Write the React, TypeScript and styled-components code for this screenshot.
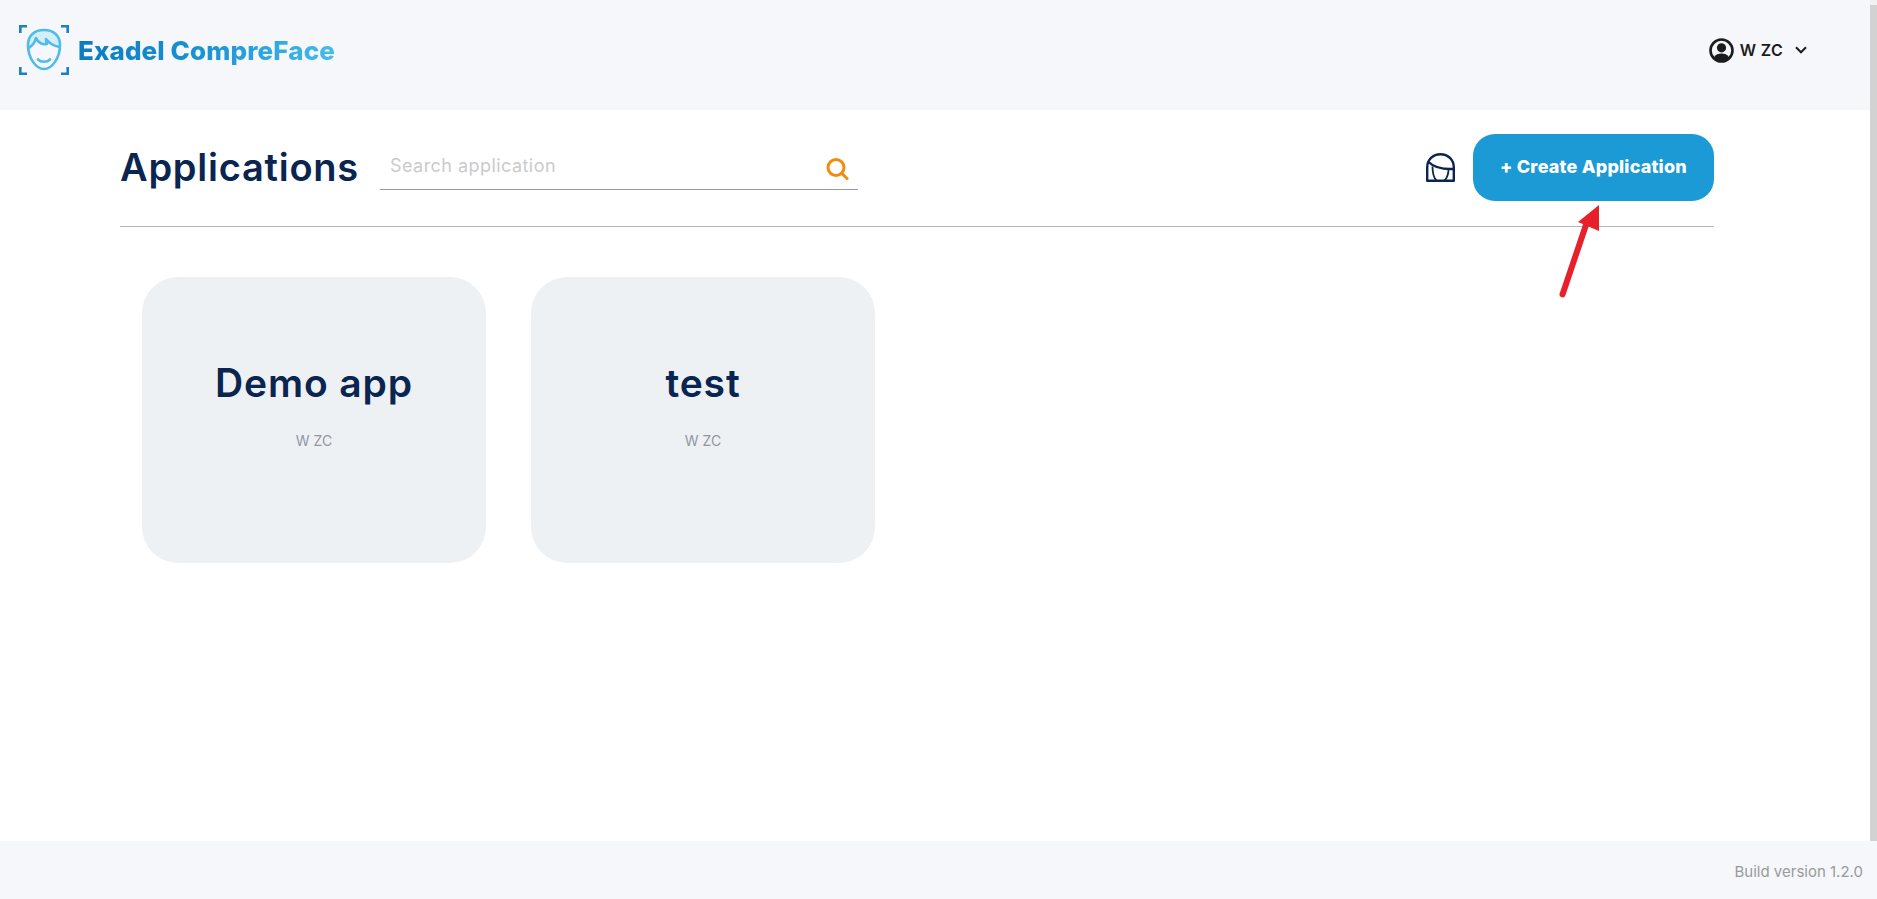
import React from 'react';
import styled, { createGlobalStyle } from 'styled-components';

const GlobalStyle = createGlobalStyle`
  html, body {
    margin: 0;
    padding: 0;
    height: 100%;
    overflow: hidden;
    background: #fff;
    font-family: Inter, "Liberation Sans", sans-serif;
  }
`;

const Page = styled.div`
  display: flex;
  flex-direction: column;
  width: 1877px;
  height: 899px;
`;

const Body = styled.div`
  display: flex;
  flex: 1;
  min-height: 0;
`;

const Content = styled.div`
  display: flex;
  flex-direction: column;
  flex: 1;
  position: relative;
`;

const ScrollTrack = styled.div`
  width: 7px;
  background: #f1f1f1;
  padding-top: 5px;
  display: flex;
`;

const ScrollThumb = styled.div`
  flex: 1;
  background: #d2d2d2;
`;

const Header = styled.header`
  height: 110px;
  box-sizing: border-box;
  background: #f5f7fb;
  display: flex;
  align-items: center;
  justify-content: space-between;
  padding: 0 63px 10px 19px;
`;

const Logo = styled.div`
  display: flex;
  align-items: center;
  gap: 9px;
`;

const LogoText = styled.span`
  font-size: 26px;
  font-weight: 800;
  letter-spacing: 0.12px;
  background: linear-gradient(90deg, #0a7cc0 0%, #1b93d4 50%, #45bceb 100%);
  -webkit-background-clip: text;
  background-clip: text;
  color: transparent;
`;

const UserMenu = styled.div`
  display: flex;
  align-items: center;
  color: #1c1c1c;
  font-size: 16px;
  font-weight: 600;
`;

const UserName = styled.span`
  margin: 0 12px 0 6px;
  letter-spacing: 0.3px;
`;

const Main = styled.main`
  flex: 1;
  padding: 0 156px 0 120px;
`;

const TitleBar = styled.div`
  height: 117px;
  display: flex;
  align-items: center;
  border-bottom: 1px solid #b8b8b8;
  box-sizing: border-box;
`;

const Title = styled.h1`
  margin: 0 21px 3px 0;
  width: 239px;
  font-size: 38px;
  font-weight: 600;
  letter-spacing: 0.75px;
  color: #0a2550;
  white-space: nowrap;
`;

const SearchBox = styled.div`
  width: 478px;
  height: 44px;
  box-sizing: border-box;
  border-bottom: 1px solid #9b9b9b;
  display: flex;
  align-items: center;
  justify-content: space-between;
  padding: 0 9px 4px 10px;
`;

const SearchInput = styled.input`
  flex: 1;
  border: 0;
  outline: 0;
  padding: 0;
  background: transparent;
  font-family: inherit;
  font-size: 18px;
  letter-spacing: 0.45px;
  color: #333;
  &::placeholder {
    color: #cbcbcb;
    opacity: 1;
  }
`;

const SearchGlyph = styled.svg`
  margin-top: 6px;
`;

const Actions = styled.div`
  margin-left: auto;
  display: flex;
  align-items: center;
  gap: 18px;
  margin-bottom: 1px;
`;

const CreateButton = styled.button`
  width: 241px;
  height: 67px;
  border: 0;
  border-radius: 22px;
  padding: 0 0 2px;
  background: #1b9ad6;
  color: #fff;
  font-family: inherit;
  font-size: 18px;
  font-weight: 800;
  letter-spacing: 0.2px;
`;

const CardGrid = styled.div`
  display: flex;
  gap: 45px;
  padding: 50px 0 0 22px;
`;

const Card = styled.div`
  width: 344px;
  height: 286px;
  border-radius: 36px;
  background: #eef1f4;
  display: flex;
  flex-direction: column;
  align-items: center;
  padding-top: 81px;
  box-sizing: border-box;
`;

const CardTitle = styled.div`
  font-size: 39px;
  line-height: 50px;
  font-weight: 600;
  letter-spacing: 0.9px;
  color: #0a2550;
`;

const CardOwner = styled.div`
  margin-top: 24px;
  font-size: 14px;
  line-height: 18px;
  color: #8e97a3;
`;

const Footer = styled.footer`
  height: 58px;
  background: #f5f7fb;
  display: flex;
  align-items: center;
  justify-content: flex-end;
  padding: 3px 14px 0 0;
  box-sizing: border-box;
  font-size: 15px;
  color: #9a9a9a;
`;

const Arrow = styled.svg`
  position: absolute;
  left: 1550px;
  top: 195px;
`;

const LogoIcon = () => (
  <svg width="50" height="50" viewBox="0 0 50 50" fill="none">
    <g stroke="#1b82c0" strokeWidth="2.6">
      <path d="M1.3 8V1.3H8" />
      <path d="M42 1.3H48.7V8" />
      <path d="M1.3 42V48.7H8" />
      <path d="M42 48.7H48.7V42" />
    </g>
    <path
      d="M9 23C13 21 16 17 17 13C19 18 24 20 28 19C27 17 27 15 27 14C30 18 35 21 41 22C41 11 34 5.5 25 5.5C16 5.5 9 11 9 23Z"
      fill="#d5eef9"
    />
    <g stroke="#4dbcea" strokeWidth="2.6" strokeLinecap="round" strokeLinejoin="round">
      <path d="M9 20C9 10 16 5 25 5C34 5 41 10 41 20C41 33 33 44 25 44C17 44 9 33 9 20Z" />
      <path d="M9.5 23C13 21 16 17 17 13C19 18 24 20 28 19C27 17 27 15 27 14C30 18 35 21 40.5 22" />
      <path d="M19 34.5C22 37.5 28 37.5 31 34.5" />
    </g>
  </svg>
);

const UserIcon = () => (
  <svg width="25" height="25" viewBox="0 0 25 25" fill="none">
    <circle cx="12.5" cy="12.5" r="11" stroke="#1c1c1c" strokeWidth="2.6" />
    <circle cx="12.5" cy="9.8" r="4.6" fill="#1c1c1c" />
    <path d="M4.8 19.5C6.5 16.5 9.5 15.6 12.5 15.6C15.5 15.6 18.5 16.5 20.2 19.5C18.3 21.8 15.6 23 12.5 23C9.4 23 6.7 21.8 4.8 19.5Z" fill="#1c1c1c" />
  </svg>
);

const Chevron = () => (
  <svg width="12" height="8" viewBox="0 0 12 8" fill="none">
    <path d="M1 1.3L6 6.3L11 1.3" stroke="#1c1c1c" strokeWidth="2" />
  </svg>
);

const SearchIcon = () => (
  <SearchGlyph width="23" height="22" viewBox="0 0 23 22" fill="none">
    <circle cx="10" cy="9.5" r="8" stroke="#f28c0f" strokeWidth="3" />
    <path d="M15.8 15.3L21 20.5" stroke="#f28c0f" strokeWidth="3" strokeLinecap="round" />
  </SearchGlyph>
);

const MaskIcon = () => (
  <svg width="29" height="29" viewBox="0 0 29 29" fill="none">
    <g stroke="#0a2550" strokeWidth="2.4" strokeLinejoin="round">
      <path d="M1.2 27.8V14.5C1.2 6.8 7 1.2 14.5 1.2C22 1.2 27.8 6.8 27.8 14.5V27.8Z" />
      <path d="M2.6 9C7 13.5 16 16.5 27.5 16" />
      <path d="M6.5 13.5C6.5 20 8 25 10.5 27.5" strokeWidth="1.8" />
      <path d="M22.5 16C22.5 21 21 25 18.5 27.5" strokeWidth="1.8" />
    </g>
  </svg>
);

const apps = ['Demo app', 'test'];

const App = () => {
  return (
    <Page>
      <GlobalStyle />
      <Body>
        <Content>
          <Header>
            <Logo>
              <LogoIcon />
              <LogoText>Exadel CompreFace</LogoText>
            </Logo>
            <UserMenu>
              <UserIcon />
              <UserName>W ZC</UserName>
              <Chevron />
            </UserMenu>
          </Header>
          <Main>
            <TitleBar>
              <Title>Applications</Title>
              <SearchBox>
                <SearchInput placeholder="Search application" />
                <SearchIcon />
              </SearchBox>
              <Actions>
                <MaskIcon />
                <CreateButton>+ Create Application</CreateButton>
              </Actions>
            </TitleBar>
            <CardGrid>
              {apps.map((name) => (
                <Card key={name}>
                  <CardTitle>{name}</CardTitle>
                  <CardOwner>W ZC</CardOwner>
                </Card>
              ))}
            </CardGrid>
          </Main>
          <Arrow width="60" height="110" viewBox="0 0 60 110" fill="none">
            <path d="M12.5 99.5L38 24" stroke="#e8202a" strokeWidth="6" strokeLinecap="round" />
            <path d="M49 10L28 27L49 36Z" fill="#e8202a" />
          </Arrow>
        </Content>
        <ScrollTrack>
          <ScrollThumb />
        </ScrollTrack>
      </Body>
      <Footer>Build version 1.2.0</Footer>
    </Page>
  );
};

export default App;
